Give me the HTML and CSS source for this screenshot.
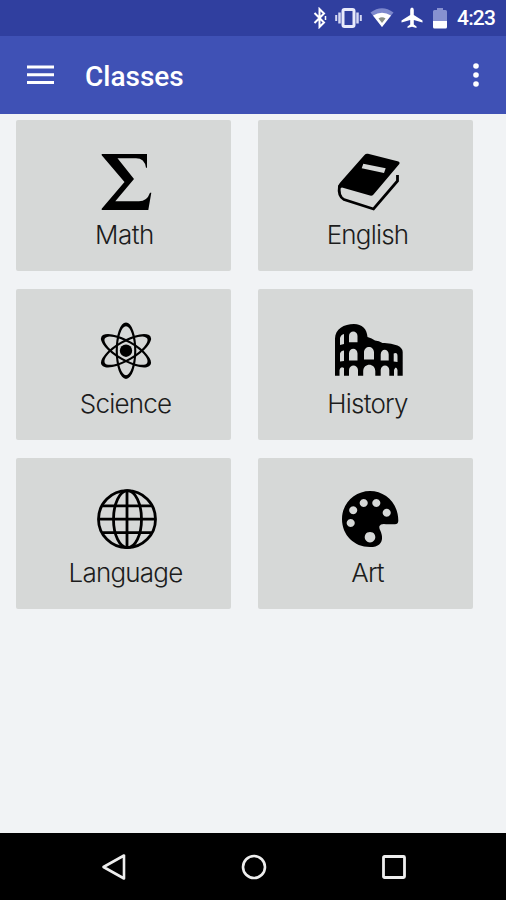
FILE: index.html
```html
<!DOCTYPE html>
<html lang="en">
<head>
  <meta charset="UTF-8">
  <meta name="viewport" content="width=device-width, initial-scale=1.0">
  <title>Classes</title>
  <link rel="stylesheet" href="styles.css">
</head>
<body>

<div class="status-bar">
  <svg class="bluetooth" width="16" height="22" viewBox="0 0 16 22">
    <path d="M2.500 6 L12 15.500 L7.500 20 V2 L12 6.500 L2.500 16" fill="none" stroke="#fff" stroke-width="2"/>
    <path d="M13.500 9 v4" stroke="#fff" stroke-width="1.500"/>
  </svg>
  <svg class="vibrate" width="27" height="22" viewBox="0 0 27 22">
    <rect x="8" y="2.500" width="11" height="17" rx="1.500" fill="none" stroke="#e8eafa" stroke-width="3"/>
    <path d="M4.500 5.500 v11 M22.500 5.500 v11" stroke="#d5d9f3" stroke-width="2.500"/>
    <path d="M1.200 8 v6 M25.800 8 v6" stroke="#d5d9f3" stroke-width="2"/>
  </svg>
  <svg class="wifi" width="24" height="22" viewBox="0 0 24 22">
    <path d="M0.500 5.500 Q12 -3 23.500 5.500 L12 20 Z" fill="#7d88cc"/>
    <path d="M3 8.500 Q12 3 21 8.500 L12 20 Z" fill="#fff"/>
    <path d="M8.500 11.500 Q12 9 15.500 11.500 L12 16 Z" fill="#8a8f86"/>
  </svg>
  <svg class="plane" width="22" height="22" viewBox="0 0 22 22">
    <path d="M11 0.500 Q12.800 0.500 12.800 3 V8 L21.500 13.500 V15.500 L12.800 13 V17.500 L15.500 19.500 V21 L11 19.800 L6.500 21 V19.500 L9.200 17.500 V13 L0.500 15.500 V13.500 L9.200 8 V3 Q9.200 0.500 11 0.500 Z" fill="#fff"/>
  </svg>
  <svg class="battery" width="14" height="21" viewBox="0 0 14 21">
    <path d="M4 0 H10 V2 H12.500 Q14 2 14 3.500 V13 H0 V3.500 Q0 2 1.500 2 H4 Z" fill="#8791d0"/>
    <path d="M0 13 H14 V19 Q14 20.500 12.500 20.500 H1.500 Q0 20.500 0 19 Z" fill="#fff"/>
  </svg>
  <span class="clock">4:23</span>
</div>

<header class="toolbar">
  <svg class="menu" width="27" height="20" viewBox="0 0 27 20">
    <path d="M0 2 H27 M0 9.800 H27 M0 17.600 H27" stroke="#fff" stroke-width="3"/>
  </svg>
  <h1 class="title">Classes</h1>
  <svg class="more" width="6" height="24" viewBox="0 0 6 24">
    <circle cx="3" cy="3" r="2.800" fill="#fff"/>
    <circle cx="3" cy="12" r="2.800" fill="#fff"/>
    <circle cx="3" cy="21" r="2.800" fill="#fff"/>
  </svg>
</header>

<main class="tile-container">

  <div class="tile">
    <svg class="icon" viewBox="0 0 81 64">
      <path d="M16.700 4 H62 V17.700 H61 Q59.500 8.300 51 8.300 H32.500 L49 29 L30.300 51.300 H54 Q62 51.300 65 42.700 H66.300 L63.300 60 H16.700 V58.800 L39.500 32 L16.700 5.200 Z"/>
    </svg>
    <span class="label math">Math</span>
  </div>

  <div class="tile">
    <svg class="icon" viewBox="0 0 81 64">
      <path fill-rule="evenodd" d="M37.500 5 Q39 3.200 41 3.800 L71.500 11.500 Q73.500 12.500 72.300 14 L46.500 44.500 Q45 46.200 43 45.600 L15 37.500 Q12.500 39 11 37.500 Q11 35 13 32.800 Z M36.300 13.800 L34.700 18.300 L57 22.900 L58.700 18.300 Z"/>
      <path class="line" d="M12.500 35.500 C11.500 42 12 47 17 49.500 L46.500 59 L70.500 31 V25"/>
    </svg>
    <span class="label">English</span>
  </div>

  <div class="tile">
    <svg class="icon" viewBox="0 0 81 64">
      <defs>
        <path id="orbit" fill-rule="evenodd" d="M41 3.400 A10.300 28.300 0 0 1 41 60 A10.300 28.300 0 0 1 41 3.400 Z M41 7.200 A8.200 24.500 0 0 0 41 56.200 A8.200 24.500 0 0 0 41 7.200 Z"/>
      </defs>
      <use href="#orbit"/>
      <use href="#orbit" transform="rotate(60 41 31.700)"/>
      <use href="#orbit" transform="rotate(120 41 31.700)"/>
      <circle cx="41" cy="31.700" r="6.200"/>
    </svg>
    <span class="label">Science</span>
  </div>

  <div class="tile">
    <svg class="icon" viewBox="0 0 81 64">
      <path fill-rule="evenodd" d="M8 56.700 V19.500 C8 10 17 5 27 5 C35 5 40 10 40.500 18 Q45 19 48 21.500 Q52 21.500 55.500 24 Q63 23.500 70.500 26.500 Q75.700 29 75.700 33 V56.700 H70.500 V51 Q69 46 67 51 V56.700 H62.300 V51 C62 45 54 45 53.700 51 V56.700 H48.300 V52 C48 43.500 36.500 43.500 36.200 52 V56.700 H31 V51 C30.500 45 22.500 45 22 51 V56.700 H17 V49 Q13.500 47 12.500 51 V56.700 Z
        M13 26 V19 Q14 15.500 17 15 V25 Z
        M22 23.300 V17 C22 11 30.500 11 30.500 17 V23.300 Z
        M13 42.500 V34.500 Q14 31.500 17 31.500 V42 Z
        M22 41.500 V34.500 C22 28 30.500 28 30.500 34.500 V41.500 Z
        M37 40.500 V33.500 C37 26 47 26 47 33.500 V40.500 Z
        M53.700 41.500 V35.500 C53.700 29 61.700 29 61.700 35.500 V41.500 Z
        M66.700 42.500 V34.500 Q70.500 33 70.500 37 V43 Z"/>
    </svg>
    <span class="label">History</span>
  </div>

  <div class="tile">
    <svg class="icon" viewBox="0 0 81 64">
      <g class="line">
        <circle cx="42" cy="31.200" r="28.500"/>
        <ellipse cx="42.500" cy="31.200" rx="14" ry="28.500"/>
        <path d="M42 3 V59 M13.500 31.200 H70.500 M17.500 17.800 H66.500 M17.500 44.700 H66.500"/>
      </g>
    </svg>
    <span class="label">Language</span>
  </div>

  <div class="tile">
    <svg class="icon" viewBox="0 0 81 64">
      <path fill-rule="evenodd" d="M43 3 C58 3 71.500 15 71.300 33 Q71 36.200 68 36.200 H59 Q53.500 35.500 52.500 38 Q51.800 40 53.500 43 C57 51 55 59 43 59 C27 59 15 47 15 31 C15 15 28 3 43 3 Z
        M36.700 11 a4 4 0 1 0 0.010 0 Z
        M49.300 11 a4 4 0 1 0 0.010 0 Z
        M59.700 20.700 a4 4 0 1 0 0.010 0 Z
        M26.200 18.300 a4 4 0 1 0 0.010 0 Z
        M23.700 31 a4 4 0 1 0 0.010 0 Z
        M43 43.900 a5.300 5.300 0 1 0 0.010 0 Z"/>
    </svg>
    <span class="label">Art</span>
  </div>

</main>

<nav class="nav-bar">
  <svg width="26" height="28" viewBox="0 0 26 28">
    <path d="M23 2.500 V25.500 L2.500 14 Z" fill="none" stroke="#eee" stroke-width="2.600" stroke-linejoin="round"/>
  </svg>
  <svg width="26" height="26" viewBox="0 0 26 26">
    <circle cx="13" cy="13" r="11" fill="none" stroke="#eee" stroke-width="2.600"/>
  </svg>
  <svg width="26" height="26" viewBox="0 0 26 26">
    <rect x="2.500" y="2.500" width="21" height="21" rx="1" fill="none" stroke="#eee" stroke-width="2.800"/>
  </svg>
</nav>

</body>
</html>
```

FILE: styles.css
```css
body {
  font-family: Roboto, sans-serif;
  display: flex;
  flex-direction: column;
  height: 900px;
  margin: 0;
  background-color: #f1f3f5;
  overflow: hidden;
}

svg {
  display: block;
  flex: none;
}

.status-bar {
  display: flex;
  align-items: center;
  justify-content: flex-end;
  height: 36px;
  padding-right: 11px;
  background-color: #303f9f;
  color: white;
}

.vibrate {
  margin-left: 7px;
}

.wifi {
  margin-left: 8px;
}

.plane {
  margin-left: 7px;
}

.battery {
  margin-left: 10px;
}

.clock {
  width: 38px;
  margin-left: 10px;
  font-size: 21px;
  font-weight: 500;
  line-height: 36px;
  letter-spacing: -0.8px;
  white-space: nowrap;
}

.toolbar {
  display: flex;
  align-items: center;
  height: 78px;
  padding: 0 27px;
  background-color: #3f51b5;
  color: white;
}

.title {
  flex: 1;
  margin: 4px 0 0 31px;
  font-size: 28px;
  font-weight: 500;
  line-height: 36px;
}

.tile-container {
  flex: 1;
  display: grid;
  grid-template-columns: 215px 215px;
  grid-auto-rows: 151px;
  align-content: start;
  gap: 18px 27px;
  padding: 6px 16px 0;
}

.tile {
  display: flex;
  flex-direction: column;
  align-items: center;
  box-sizing: border-box;
  padding: 30px 0 0 4px;
  border-radius: 2px;
  background-color: #d6d8d7;
}

.icon {
  width: 81px;
  height: 64px;
  fill: black;
}

.line {
  fill: none;
  stroke: black;
  stroke-width: 2.8;
}

.label {
  font-family: Inter, "Liberation Sans", sans-serif;
  font-size: 26px;
  font-weight: 300;
  line-height: 42px;
  letter-spacing: -0.8px;
  color: #1c1c1c;
}

.math {
  padding-right: 2px;
  letter-spacing: -0.5px;
}

.nav-bar {
  display: flex;
  align-items: center;
  justify-content: space-between;
  height: 67px;
  padding: 0 99px 0 101px;
  background-color: black;
}
```
